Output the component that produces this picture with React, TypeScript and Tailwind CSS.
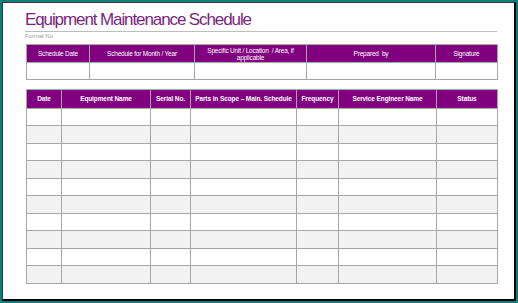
const topCols = [
  { label: "Schedule Date", w: 63 },
  { label: "Schedule for Month / Year", w: 105 },
  { label: "Specific Unit / Location\u00a0 / Area, if", label2: "applicable", w: 112 },
  { label: "Prepared\u00a0 by", w: 129 },
  { label: "Signature", w: 62 },
];

const cols = [
  { label: "Date", w: 35 },
  { label: "Equipment Name", w: 89 },
  { label: "Serial No.", w: 40 },
  { label: "Parts in Scope \u2013 Main. Schedule", w: 106 },
  { label: "Frequency", w: 42 },
  { label: "Service Engineer Name", w: 98 },
  { label: "Status", w: 61 },
];

const rows = Array.from({ length: 10 }, (_, i) => i);

export default function App() {
  return (
    <div className="h-[303px] w-[518px] bg-[#0b7d7d] p-[2px] font-['Liberation_Sans',Arial,sans-serif]">
      <div className="flex h-full w-full flex-col border-t border-l border-b-2 border-r-2 border-t-[#3a3a3a] border-l-[#3a3a3a] border-b-black border-r-black bg-white pl-[22px] pr-[17px]">
        <div className="mt-[7px] h-[20px] text-[17px] leading-[20px] tracking-[-1.1px] text-[#7b1f80]">
          Equipment Maintenance Schedule
        </div>
        <div className="mt-px h-px w-[472px] bg-[#bdbdbd]" />
        <div className="h-[8px] text-[6px] leading-[8px] text-[#9a9a9a]">Formal No</div>

        <table className="ml-[1px] mt-[4px] w-[471px] table-fixed border-collapse">
          <colgroup>
            {topCols.map((c) => (
              <col key={c.label} style={{ width: c.w }} />
            ))}
          </colgroup>
          <thead>
            <tr className="h-[18px] bg-[#800080]">
              {topCols.map((c) => (
                <th
                  key={c.label}
                  className="border border-[#a6a6a6] p-0 text-center align-middle text-[6.5px] font-normal leading-[7px] tracking-[-0.2px] text-white"
                >
                  {c.label}
                  {c.label2 && (
                    <>
                      <br />
                      {c.label2}
                    </>
                  )}
                </th>
              ))}
            </tr>
          </thead>
          <tbody>
            <tr className="h-[17px]">
              {topCols.map((c) => (
                <td key={c.label} className="border border-[#a6a6a6] p-0" />
              ))}
            </tr>
          </tbody>
        </table>

        <table className="ml-[1px] mt-[9px] w-[471px] table-fixed border-collapse">
          <colgroup>
            {cols.map((c) => (
              <col key={c.label} style={{ width: c.w }} />
            ))}
          </colgroup>
          <thead>
            <tr className="h-[18.5px] bg-[#800080]">
              {cols.map((c) => (
                <th
                  key={c.label}
                  className="whitespace-nowrap border border-[#a6a6a6] p-0 text-center align-middle text-[6.5px] font-bold leading-[8px] tracking-[-0.1px] text-white"
                >
                  {c.label}
                </th>
              ))}
            </tr>
          </thead>
          <tbody>
            {rows.map((r) => (
              <tr key={r} className={r % 2 === 1 ? "h-[17.5px] bg-[#f2f2f2]" : "h-[17.5px] bg-white"}>
                {cols.map((c) => (
                  <td key={c.label} className="border border-[#a6a6a6] p-0" />
                ))}
              </tr>
            ))}
          </tbody>
        </table>
      </div>
    </div>
  );
}
